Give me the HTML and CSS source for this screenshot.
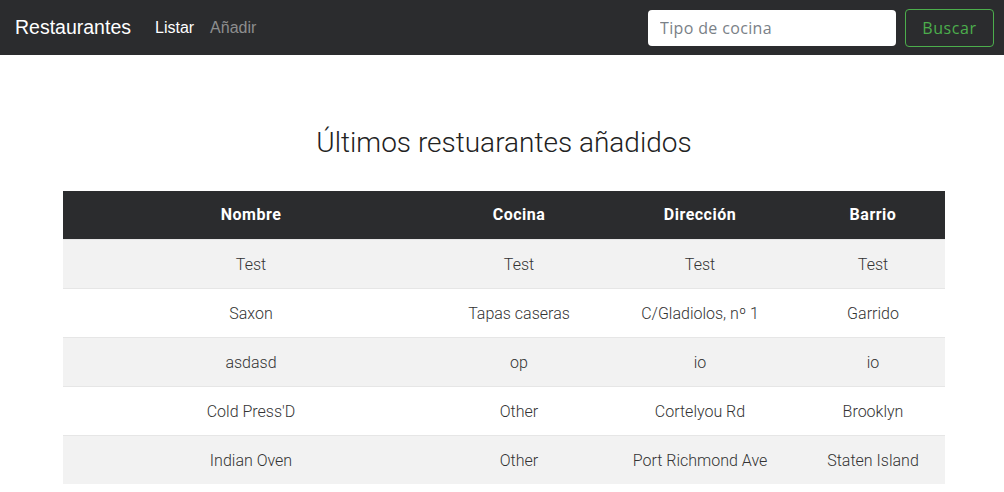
FILE: index.html
```html
<!DOCTYPE html>
<html lang="es">
<head>
<meta charset="utf-8">
<title>Restaurantes</title>
<link rel="stylesheet" href="styles.css">
</head>
<body>
<nav class="navbar">
  <a class="brand" href="#">Restaurantes</a>
  <ul class="nav">
    <li><a class="nav-link active" href="#">Listar</a></li>
    <li><a class="nav-link" href="#">Añadir</a></li>
  </ul>
  <form class="search">
    <input class="search-input" type="text" placeholder="Tipo de cocina">
    <button class="search-btn" type="button">Buscar</button>
  </form>
</nav>
<main class="container">
  <h1 class="title">Últimos restuarantes añadidos</h1>
  <table class="table">
    <colgroup>
      <col class="c1"><col class="c2"><col class="c3"><col class="c4">
    </colgroup>
    <thead>
      <tr><th>Nombre</th><th>Cocina</th><th>Dirección</th><th>Barrio</th></tr>
    </thead>
    <tbody>
      <tr><td>Test</td><td>Test</td><td>Test</td><td>Test</td></tr>
      <tr><td>Saxon</td><td>Tapas caseras</td><td>C/Gladiolos, nº 1</td><td>Garrido</td></tr>
      <tr><td>asdasd</td><td>op</td><td>io</td><td>io</td></tr>
      <tr><td>Cold Press'D</td><td>Other</td><td>Cortelyou Rd</td><td>Brooklyn</td></tr>
      <tr><td>Indian Oven</td><td>Other</td><td>Port Richmond Ave</td><td>Staten Island</td></tr>
    </tbody>
  </table>
</main>
</body>
</html>
```
FILE: styles.css
```css
* { box-sizing: border-box; }
html, body { margin: 0; padding: 0; }
body {
  font-family: Roboto, "Liberation Sans", sans-serif;
  color: #333;
  background: #fff;
  font-weight: 300;
}
.navbar {
  height: 55px;
  background: #2b2c2e;
  display: flex;
  align-items: center;
  padding: 0 10px 0 15px;
}
.brand {
  font-family: "Liberation Sans", Arial, sans-serif;
  font-size: 19.5px;
  color: #fff;
  text-decoration: none;
  margin-right: 24px;
}
.nav {
  list-style: none;
  margin: 0;
  padding: 0;
  display: flex;
  gap: 16px;
  flex: 1;
}
.nav-link {
  font-family: "Liberation Sans", Arial, sans-serif;
  font-size: 16px;
  color: #8d8e8f;
  text-decoration: none;
}
.nav-link.active { color: #fff; }
.search {
  display: flex;
  align-items: center;
  gap: 9px;
}
.search-input {
  width: 248px;
  height: 36px;
  border: none;
  border-radius: 4px;
  padding: 0 12px;
  font-family: "Open Sans", sans-serif;
  font-weight: 400;
  font-size: 16px;
  letter-spacing: 0.35px;
  color: #333;
  background: #fff;
}
.search-input::placeholder { color: #7a8187; opacity: 1; }
.search-btn {
  width: 89px;
  height: 38px;
  background: transparent;
  border: 1px solid #4cae4c;
  border-radius: 4px;
  color: #4cae4c;
  font-family: "Open Sans", sans-serif;
  font-weight: 400;
  font-size: 16px;
  letter-spacing: 0.6px;
}
.container {
  width: 882px;
  margin-left: 63px;
}
.title {
  font-weight: 300;
  font-size: 28px;
  text-align: center;
  margin: 71px 0 31px;
  line-height: 34px;
  color: #222;
}
.table {
  width: 882px;
  border-collapse: collapse;
  table-layout: fixed;
  font-size: 16px;
}
.c1 { width: 376px; }
.c2 { width: 160px; }
.c3 { width: 202px; }
.c4 { width: 144px; }
.table th {
  background: #2b2c2e;
  color: #fff;
  font-weight: 700;
  letter-spacing: 0.5px;
  height: 48px;
  padding: 0 12px;
  text-align: center;
}
.table td {
  height: 49px;
  padding: 0 12px;
  padding-top: 1px;
  text-align: center;
  border-top: 1px solid #e6e6e6;
  white-space: nowrap;
}
.table tbody tr:nth-child(odd) { background: #f2f2f2; }
```
